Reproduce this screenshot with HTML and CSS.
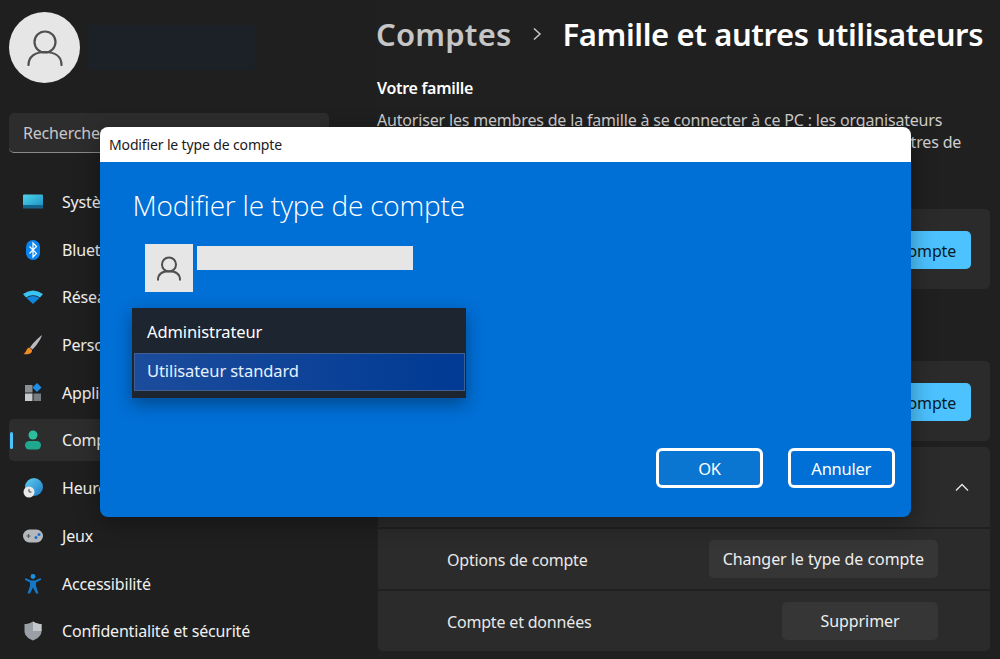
FILE: index.html
```html
<!DOCTYPE html>
<html lang="fr">
<head>
<meta charset="utf-8">
<title>Famille et autres utilisateurs</title>
<link rel="stylesheet" href="styles.css">
</head>
<body>
<div class="app">
  <aside class="sidebar">
    <div class="profile">
      <div class="avatar">
        <svg viewBox="0 0 36 36" width="36" height="36" fill="none" stroke="#4f4f4f" stroke-width="2.200" stroke-linecap="round"><circle cx="18" cy="12" r="10.500"/><path d="M1.500 35c0-8.500 6.500-13 16.500-13s16.500 4.500 16.500 13"/></svg>
      </div>
      <div class="redacted"></div>
    </div>
    <div class="search">Rechercher un paramètre</div>
    <nav class="nav">
      <a class="nav-item"><svg class="ico" viewBox="0 0 20 20"><defs><linearGradient id="sys" x1="0" y1="0" x2="1" y2="1"><stop offset="0" stop-color="#4fd4e8"/><stop offset="1" stop-color="#1a8fc4"/></linearGradient><linearGradient id="globe" x1="0" y1="0" x2="1" y2="1"><stop offset="0" stop-color="#5fd0f0"/><stop offset="1" stop-color="#1c78c8"/></linearGradient></defs><rect x="0" y="2.500" width="20" height="13" fill="url(#sys)" rx="1"/><rect x="0" y="13" width="20" height="3.500" fill="#14638a"/></svg><span>Système</span></a>
      <a class="nav-item"><svg class="ico" viewBox="0 0 20 20"><rect x="3" y="0" width="14" height="20" rx="7" fill="#0a84f0"/><path d="M6.500 6.500l7 7-3.500 3.500v-14l3.500 3.500-7 7" fill="none" stroke="#fff" stroke-width="1.200"/></svg><span>Bluetooth et appareils</span></a>
      <a class="nav-item"><svg class="ico" viewBox="0 0 20 20"><path d="M0 7Q10 0 20 7L17 10.500Q10 6 3 10.500Z" fill="#38c4f4"/><path d="M3.500 11Q10 6.800 16.500 11L10 17Z" fill="#0f86dc"/></svg><span>Réseau et Internet</span></a>
      <a class="nav-item"><svg class="ico" viewBox="0 0 20 20"><path d="M19 0C15 3 9.500 8.500 7 12.500L9.500 14.500C13 11 17.500 5 19 0Z" fill="#b9bcc0"/><path d="M6.500 12.500C3 13 3.500 17.500 0.500 19 4.500 20 9.500 19 9 15Z" fill="#f08a24"/></svg><span>Personnalisation</span></a>
      <a class="nav-item"><svg class="ico" viewBox="0 0 20 20"><rect x="2" y="2" width="7.500" height="7.500" fill="#8a8f94"/><rect x="2" y="10.500" width="7.500" height="7.500" fill="#c8cbce"/><rect x="10.500" y="10.500" width="7.500" height="7.500" fill="#777c81"/><path d="M14 0l4.500 4.500L14 9 9.500 4.500Z" fill="#1e8fe8"/></svg><span>Applications</span></a>
      <a class="nav-item active"><svg class="ico" viewBox="0 0 20 20"><circle cx="10" cy="5" r="4.500" fill="#2bbd9e"/><rect x="2" y="11" width="16" height="8.500" rx="4.200" fill="#1fa88e"/></svg><span>Comptes</span></a>
      <a class="nav-item"><svg class="ico" viewBox="0 0 20 20"><circle cx="11" cy="9" r="9" fill="url(#globe)"/><circle cx="6" cy="14" r="5.500" fill="#e8e8e8"/><path d="M6 11v3h2.500" fill="none" stroke="#444" stroke-width="1"/></svg><span>Heure et langue</span></a>
      <a class="nav-item"><svg class="ico" viewBox="0 0 20 20"><rect x="0" y="3.500" width="20" height="13" rx="6.500" fill="#b4b8bc"/><path d="M3.500 10h4M5.500 8v4" stroke="#555" stroke-width="1.200"/><circle cx="13" cy="11.500" r="1.500" fill="#1a6fd0"/><circle cx="16" cy="8.500" r="1.500" fill="#1a6fd0"/></svg><span>Jeux</span></a>
      <a class="nav-item"><svg class="ico" viewBox="0 0 20 20"><circle cx="10" cy="2.500" r="2.400" fill="#1e90e0"/><path d="M2.500 4L8 6.500h4L17.500 4 18.200 5.800 13 8.500V12l2.500 7.500H13L10 13.500 7 19.500H4.500L7 12V8.500L1.800 5.800Z" fill="#1478c8"/></svg><span>Accessibilité</span></a>
      <a class="nav-item"><svg class="ico" viewBox="0 0 20 20"><path d="M10 0.500C13 2.500 16 3 18.500 3V10C18.500 15 14 18 10 19.500 6 18 1.500 15 1.500 10V3C4 3 7 2.500 10 0.500Z" fill="#9aa0a6"/><path d="M10 0.500C13 2.500 16 3 18.500 3V10H10Z" fill="#c4c8cc"/></svg><span>Confidentialité et sécurité</span></a>
    </nav>
  </aside>

  <main class="main">
    <h1 class="crumbs"><span class="crumb-parent">Comptes</span><svg class="crumb-sep" viewBox="0 0 10 14" width="10" height="14" fill="none" stroke="#c8c8c8" stroke-width="1.500"><path d="M2 1.500L8 7 2 12.500"/></svg><span>Famille et autres utilisateurs</span></h1>
    <h2 class="section-title">Votre famille</h2>
    <p class="section-text">Autoriser les membres de la famille à se connecter à ce PC : les organisateurs peuvent aider à protéger les membres de la famille et régir leurs paramètres de</p>
    <div class="card card-first"><button class="btn-accent">Ajouter un compte</button></div>
    <div class="card card-second"><button class="btn-accent">Ajouter un compte</button></div>
    <div class="group">
      <div class="group-head"><svg viewBox="0 0 14 8" width="14" height="8" fill="none" stroke="#e8e8e8" stroke-width="1.300"><path d="M1 7.500L7 1.500l6 6"/></svg></div>
      <div class="row"><span>Options de compte</span><button class="btn">Changer le type de compte</button></div>
      <div class="row"><span>Compte et données</span><button class="btn btn-wide">Supprimer</button></div>
    </div>
  </main>
</div>

<section class="dialog">
  <header class="dialog-bar">Modifier le type de compte</header>
  <div class="dialog-body">
    <h2 class="dialog-title">Modifier le type de compte</h2>
    <div class="user">
      <div class="user-pic"><svg viewBox="0 0 36 36" width="24" height="25" fill="none" stroke="#4f4f4f" stroke-width="3" stroke-linecap="round"><circle cx="18" cy="12" r="10.500"/><path d="M1.500 35c0-8.500 6.500-13 16.500-13s16.500 4.500 16.500 13"/></svg></div>
      <div class="user-name"></div>
    </div>
    <ul class="list">
      <li class="list-item">Administrateur</li>
      <li class="list-item selected">Utilisateur standard</li>
    </ul>
    <div class="actions">
      <button class="dlg-btn ok">OK</button>
      <button class="dlg-btn">Annuler</button>
    </div>
  </div>
</section>
</body>
</html>
```

FILE: styles.css
```css
* { box-sizing: border-box; }
html, body { margin: 0; height: 100%; }
body {
  background: #202020;
  color: #fff;
  font-family: "Noto Sans", "Open Sans", sans-serif;
  overflow: hidden;
  position: relative;
}
.app { display: flex; height: 659px; }

.sidebar { width: 377px; flex: none; padding: 12px 0 0 9px; background: #1f1f1f; }
.profile { display: flex; align-items: center; gap: 7px; }
.avatar {
  width: 71px; height: 71px; border-radius: 50%;
  background: #e6e6e6;
  display: flex; align-items: center; justify-content: center;
}
.redacted { width: 168px; height: 45px; background: #1b2127; }
.search {
  width: 320px; height: 40px; margin-top: 30px; padding: 0 14px;
  background: #2d2d2d; border-radius: 5px;
  border-bottom: 1px solid #8a8a8a;
  color: #c8c8c8; font-size: 16px; line-height: 41px; letter-spacing: -0.180px;
  white-space: nowrap;
}
.nav { display: flex; flex-direction: column; gap: 5.700px; margin-top: 28px; }
.nav-item {
  position: relative;
  display: flex; align-items: center; gap: 19px;
  height: 42px; padding-left: 14px; border-radius: 5px;
  font-size: 16px; letter-spacing: -0.180px; color: #f0f0f0;
  white-space: nowrap;
}
.nav-item.active { background: #2d2d2d; width: 320px; }
.nav-item.active::before {
  content: ""; position: absolute; left: 1px; top: 13px;
  width: 3px; height: 17px; border-radius: 2px; background: #4cc2ff;
}
.ico { width: 20px; height: 20px; flex: none; }

.main { flex: 1; min-width: 0; padding: 12px 10px 0 0; }
.crumbs {
  display: flex; align-items: center; margin: -1px 0 0 -1px;
  font-size: 31px; line-height: 46px; font-weight: 600; letter-spacing: -0.380px;
  white-space: nowrap;
}
.crumb-parent { color: #c6c6c6; letter-spacing: 0.200px; }
.crumb-sep { margin: 0 20px 0 21px; }
.section-title { margin: 20px 0 0; font-size: 16px; line-height: 22px; font-weight: 600; letter-spacing: -0.300px; }
.section-text {
  margin: 10px 0 0; width: 590px;
  font-size: 16px; line-height: 22px; letter-spacing: -0.180px; color: #cfcfcf;
}
.card {
  display: flex; align-items: center; justify-content: flex-end;
  height: 80px; padding-right: 19px; background: #2b2b2b; border-radius: 5px;
  margin-left: 1px;
}
.card-first { margin-top: 56px; }
.card-second { margin-top: 72px; }
.btn-accent {
  height: 38px; width: 170px; margin-top: 2px; padding: 2px 15px 0 0; border: 0; border-radius: 5px;
  background: #4cc2ff; color: #0a1a26;
  font: inherit; font-size: 16px; letter-spacing: -0.180px; text-align: right;
}
.group { margin: 6px 0 0 1px; display: flex; flex-direction: column; gap: 2px; }
.group-head {
  height: 80px; background: #2b2b2b; border-radius: 5px 5px 0 0;
  display: flex; align-items: center; justify-content: flex-end; padding: 0 21px 0 0;
}
.row {
  display: flex; align-items: center; justify-content: space-between;
  height: 60px; padding: 0 52px 0 69px; background: #2b2b2b;
  font-size: 16px; letter-spacing: -0.180px; color: #e8e8e8;
}
.row span { margin-top: 2px; }
.row:last-child { border-radius: 0 0 5px 5px; }
.btn {
  height: 38px; padding: 0 14px; border: 0; border-radius: 5px;
  background: #363636; color: #eee;
  font: inherit; font-size: 16px; letter-spacing: -0.060px;
}
.btn-wide { width: 156px; }

.dialog {
  position: absolute; left: 100px; top: 127px; width: 811px; height: 390px;
  border-radius: 8px; overflow: hidden;
  box-shadow: 0 6px 24px rgba(0,0,0,.35);
}
.dialog-bar {
  height: 35px; background: #fff; color: #1a1a1a;
  padding-left: 9px; font-size: 14px; line-height: 35px; letter-spacing: -0.140px;
}
.dialog-body {
  height: 355px; background: #006fd6; padding: 23px 16px 0 32.500px;
  display: flex; flex-direction: column;
}
.dialog-title { margin: 0; font-size: 28px; line-height: 40px; font-weight: 300; letter-spacing: -0.200px; font-family: "Open Sans", sans-serif; }
.user { display: flex; align-items: flex-start; gap: 4px; margin: 19px 0 0 12.500px; }
.user-pic {
  width: 48px; height: 48px; background: #e6e6e6;
  display: flex; align-items: center; justify-content: center;
}
.user-name { width: 216px; height: 24px; margin-top: 2px; background: #e6e6e6; }
.list {
  list-style: none; margin: 16px 0 0 -0.500px; padding: 6px 1px 7px 2px; width: 333.500px;
  background: #1c2530; box-shadow: 0 6px 16px rgba(0,0,0,.35);
  font-size: 16.500px; letter-spacing: -0.100px;
}
.list-item { height: 38px; line-height: 35px; padding-left: 13px; }
.list-item.selected {
  margin-top: 1px; border: 1px solid #3f5f90; padding-left: 12px; line-height: 34px;
  background: linear-gradient(90deg, #1c4c9c, #003a94);
  color: #e6f0ff;
}
.actions { display: flex; justify-content: flex-end; gap: 24.300px; margin-top: auto; padding-bottom: 29px; }
.dlg-btn {
  width: 107.500px; height: 40px; border: 3px solid #fff; border-radius: 6px;
  background: transparent; color: #fff;
  font: inherit; font-size: 16.500px; letter-spacing: -0.250px;
}
.dlg-btn.ok { background: #0a76d2; }
```
